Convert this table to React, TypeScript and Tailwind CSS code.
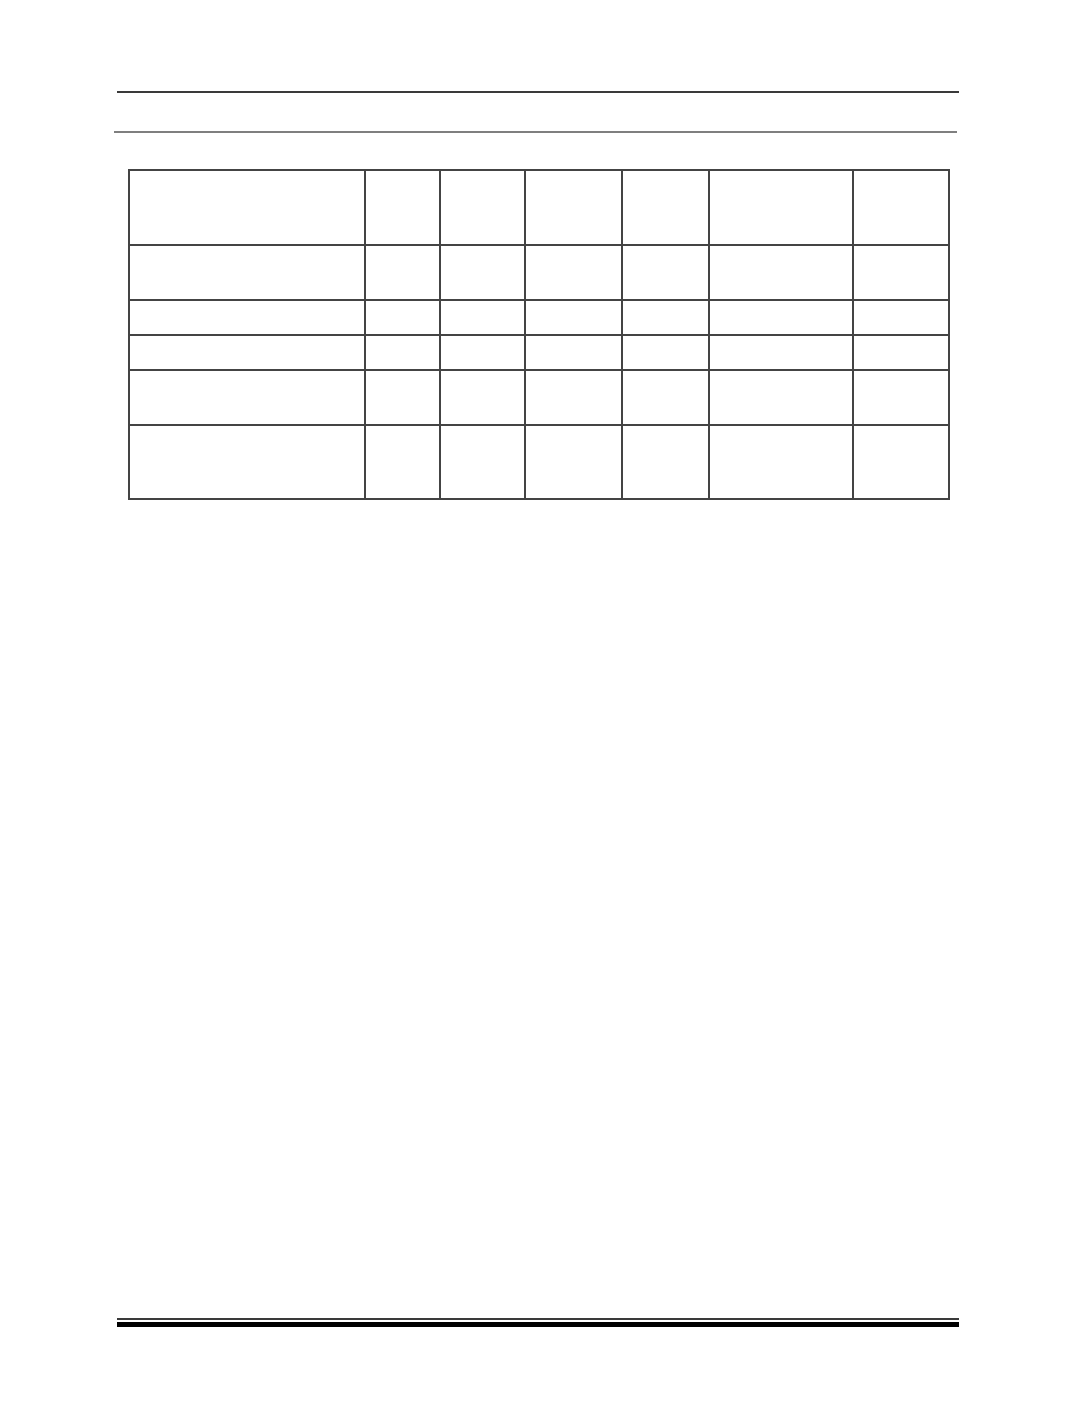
const colWidths = [236, 75, 85, 97, 87, 144, 96];
const rowHeights = [75, 55, 35, 35, 55, 74];

export default function App() {
  return (
    <div className="min-h-[1422px] w-[1075px] bg-white font-['Liberation_Sans',sans-serif] flex flex-col">
      {/* header rules */}
      <div className="mt-[91px] ml-[117px] w-[842px] h-[2px] bg-[#3a3a3a]" />
      <div className="mt-[38px] ml-[114px] w-[843px] h-[2px] bg-[#7f7f7f]" />

      {/* empty table */}
      <div className="mt-[36px] ml-[128px]">
        <table className="border-collapse border-[2px] border-[#444444]">
          <tbody>
            {rowHeights.map((h, r) => (
              <tr key={r}>
                {colWidths.map((w, c) => (
                  <td
                    key={c}
                    className="border-[2px] border-[#444444] p-0"
                    style={{ width: w, height: h }}
                  />
                ))}
              </tr>
            ))}
          </tbody>
        </table>
      </div>

      {/* footer rules */}
      <div className="mt-auto mb-[95px] ml-[117px] w-[842px] flex flex-col">
        <div className="h-[2px] bg-[#3a3a3a]" />
        <div className="h-[2px] bg-white" />
        <div className="h-[5px] bg-black" />
      </div>
    </div>
  );
}
